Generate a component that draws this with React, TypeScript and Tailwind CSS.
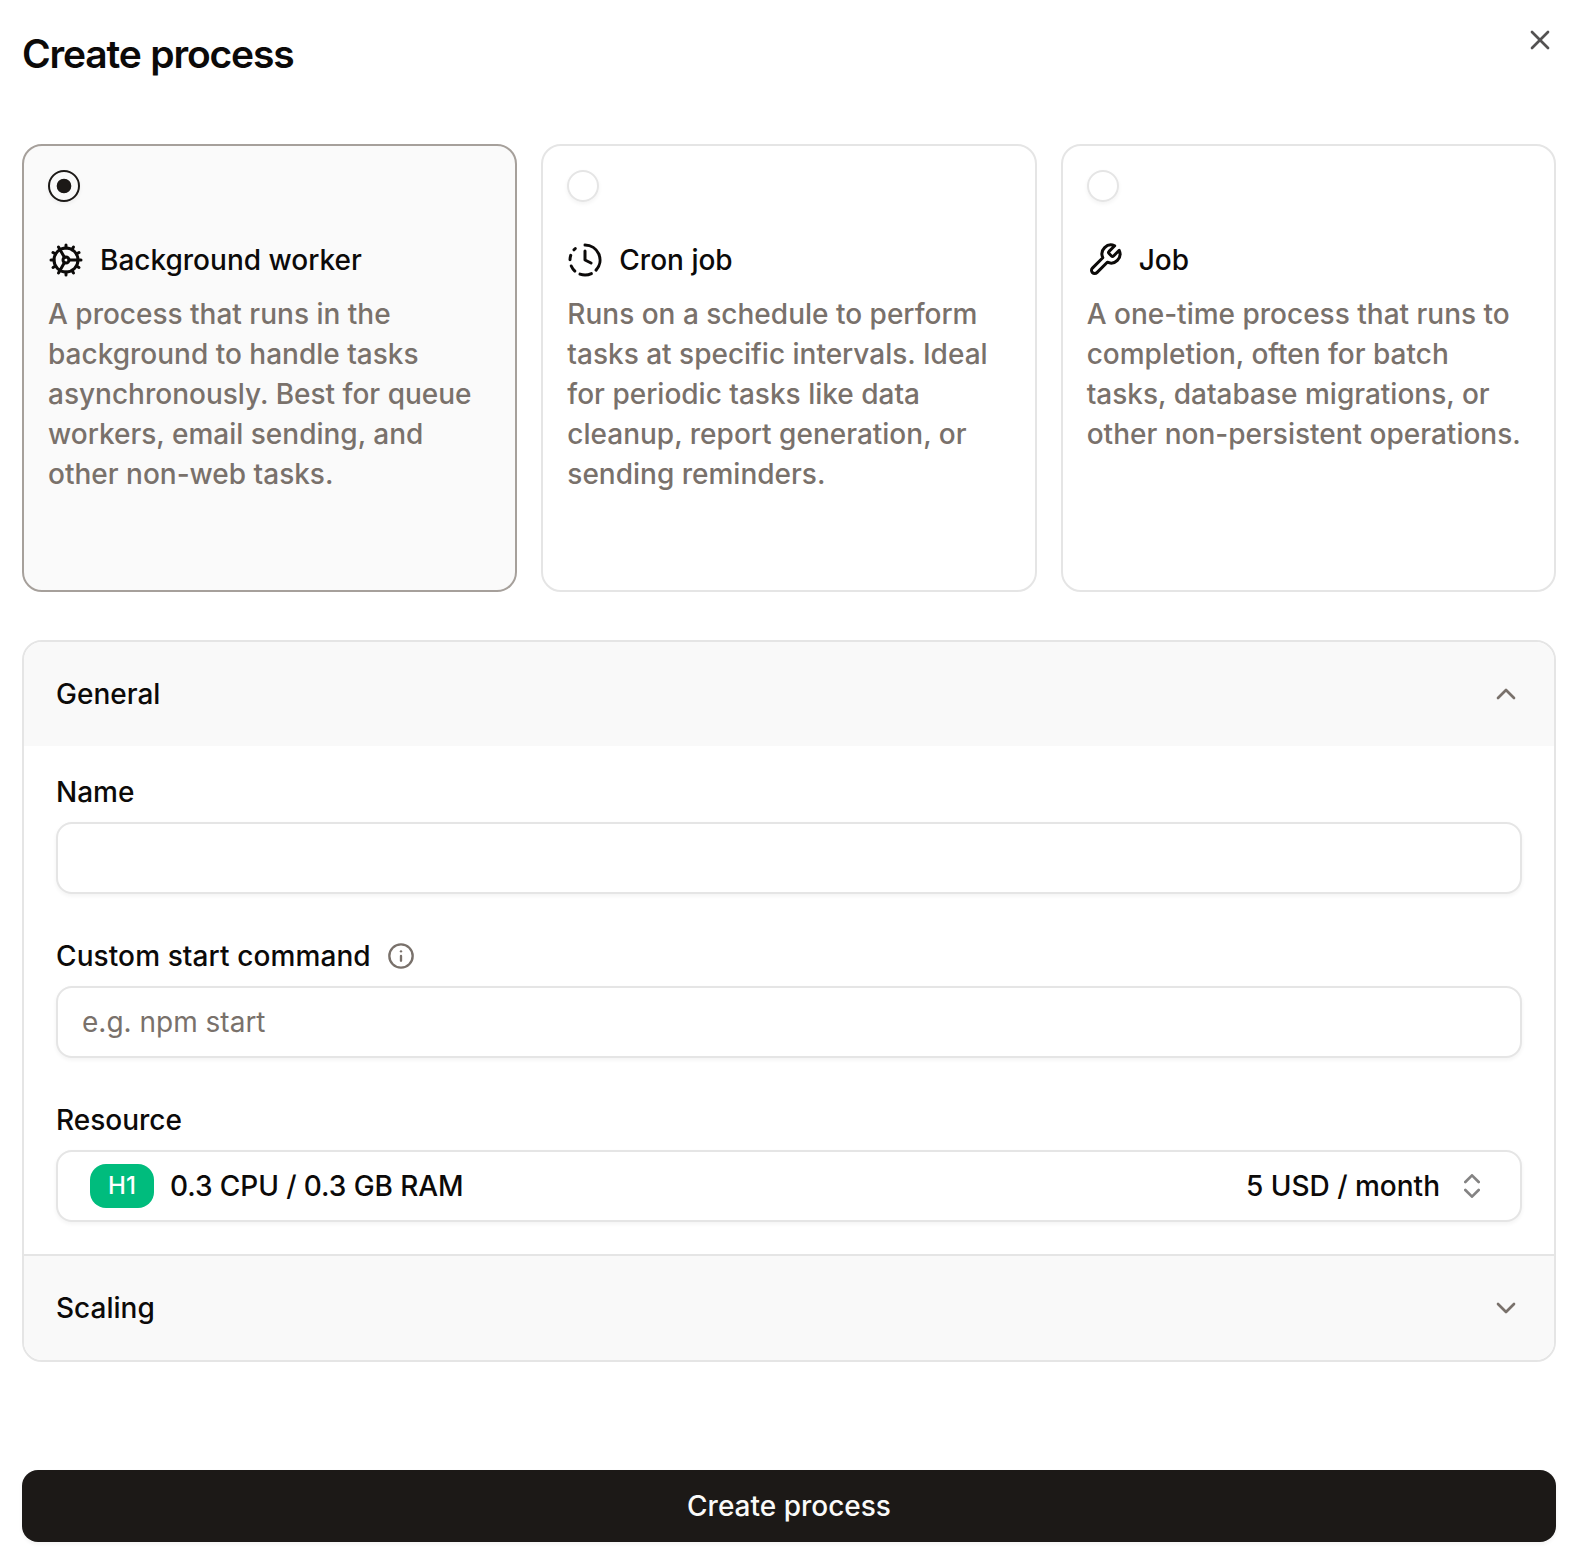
import { ReactNode } from "react";
import { ChevronDown, ChevronsUpDown, ChevronUp, Circle, ClockFading, Cog, Info, X } from "lucide-react";

type CardProps = { icon: ReactNode; title: string; text: string; selected?: boolean };

function WrenchIcon() {
  return (
    <svg
      className="size-9"
      viewBox="0 0 24 24"
      fill="none"
      stroke="currentColor"
      strokeWidth={2}
      strokeLinecap="round"
      strokeLinejoin="round"
    >
      <path d="M14.7 6.3a1 1 0 0 0 0 1.4l1.6 1.6a1 1 0 0 0 1.4 0l3.77-3.77a6 6 0 0 1-7.94 7.94l-6.91 6.91a2.12 2.12 0 0 1-3-3l6.91-6.91a6 6 0 0 1 7.94-7.94l-3.76 3.76z" />
    </svg>
  );
}

function TypeCard({ icon, title, text, selected }: CardProps) {
  return (
    <div
      role="radio"
      aria-checked={!!selected}
      className={
        "flex h-[448px] flex-col rounded-[20px] border-2 p-6 " +
        (selected ? "border-[#a6a09b] bg-[#fafafa]" : "border-[#e5e5e5] bg-white")
      }
    >
      <span
        className={
          "flex size-8 shrink-0 items-center justify-center rounded-full border-2 shadow-[0_2px_4px_rgba(0,0,0,0.05)] " +
          (selected ? "border-[#1c1917]" : "border-[#e5e5e5]")
        }
      >
        {selected && <Circle className="size-4 fill-[#1c1917] text-[#1c1917]" />}
      </span>
      <div className="mt-[38px] flex h-10 items-center gap-4">
        {icon}
        <span>{title}</span>
      </div>
      <p className="mt-[14px] text-[#79716b]">{text}</p>
    </div>
  );
}

const fieldBox =
  "flex h-[72px] w-full items-center rounded-[16px] border-2 border-[#e5e5e5] bg-white shadow-[0_2px_4px_rgba(0,0,0,0.05)]";

export default function App() {
  return (
    <div className="h-[1560px] w-[1570px] bg-white pr-[14px] pl-[22px] font-['Inter',sans-serif] text-[28px] leading-10 font-medium text-[#0c0a09]">
      <header className="flex h-[144px] items-start justify-between">
        <h1 className="mt-[26px] text-[39px] leading-[56px] font-semibold tracking-[-0.03em] [word-spacing:1px]">
          Create process
        </h1>
        <X className="mt-6 size-8 opacity-70" />
      </header>

      <div role="radiogroup" className="grid grid-cols-3 gap-6">
        <TypeCard
          selected
          icon={<Cog className="size-9" />}
          title="Background worker"
          text="A process that runs in the background to handle tasks asynchronously. Best for queue workers, email sending, and other non-web tasks."
        />
        <TypeCard
          icon={<ClockFading className="size-9" />}
          title="Cron job"
          text="Runs on a schedule to perform tasks at specific intervals. Ideal for periodic tasks like data cleanup, report generation, or sending reminders."
        />
        <TypeCard
          icon={<WrenchIcon />}
          title="Job"
          text="A one-time process that runs to completion, often for batch tasks, database migrations, or other non-persistent operations."
        />
      </div>

      <section className="mt-12 overflow-hidden rounded-[20px] border-2 border-[#e5e5e5]">
        <div className="flex h-[104px] items-center justify-between bg-[#f9f9f9] px-8">
          <span>General</span>
          <ChevronUp className="size-8 text-[#79716b]" />
        </div>
        <div className="flex flex-col gap-8 px-8 pt-[26px] pb-8">
          <div className="flex flex-col gap-[10px]">
            <span>Name</span>
            <div className={fieldBox} />
          </div>
          <div className="mt-[10px] flex flex-col gap-[10px]">
            <div className="flex items-center gap-4">
              <span className="tracking-[0.1px]">Custom start command</span>
              <Info className="size-7 text-[#79716b]" />
            </div>
            <div className={fieldBox}>
              <span className="pl-6 font-normal text-[#79716b]">e.g. npm start</span>
            </div>
          </div>
          <div className="mt-[10px] flex flex-col gap-[10px]">
            <span>Resource</span>
            <div className={fieldBox}>
              <div className="flex flex-1 items-center px-8">
                <span className="flex h-11 w-16 items-center justify-center rounded-[16px] bg-[#00bc7d] text-2xl text-white">
                  H1
                </span>
                <span className="ml-4 tracking-[-0.08px]">0.3 CPU / 0.3 GB RAM</span>
                <span className="ml-auto">5 USD / month</span>
                <ChevronsUpDown className="ml-4 size-8 opacity-50" />
              </div>
            </div>
          </div>
        </div>
        <div className="flex h-[106px] items-center justify-between border-t-2 border-[#e5e5e5] bg-[#f9f9f9] px-8">
          <span>Scaling</span>
          <ChevronDown className="size-8 text-[#79716b]" />
        </div>
      </section>

      <button className="mt-[108px] flex h-[72px] w-full items-center justify-center rounded-[16px] bg-[#1c1917] text-[#fafaf9] shadow-[0_2px_4px_rgba(0,0,0,0.05)]">
        Create process
      </button>
    </div>
  );
}
